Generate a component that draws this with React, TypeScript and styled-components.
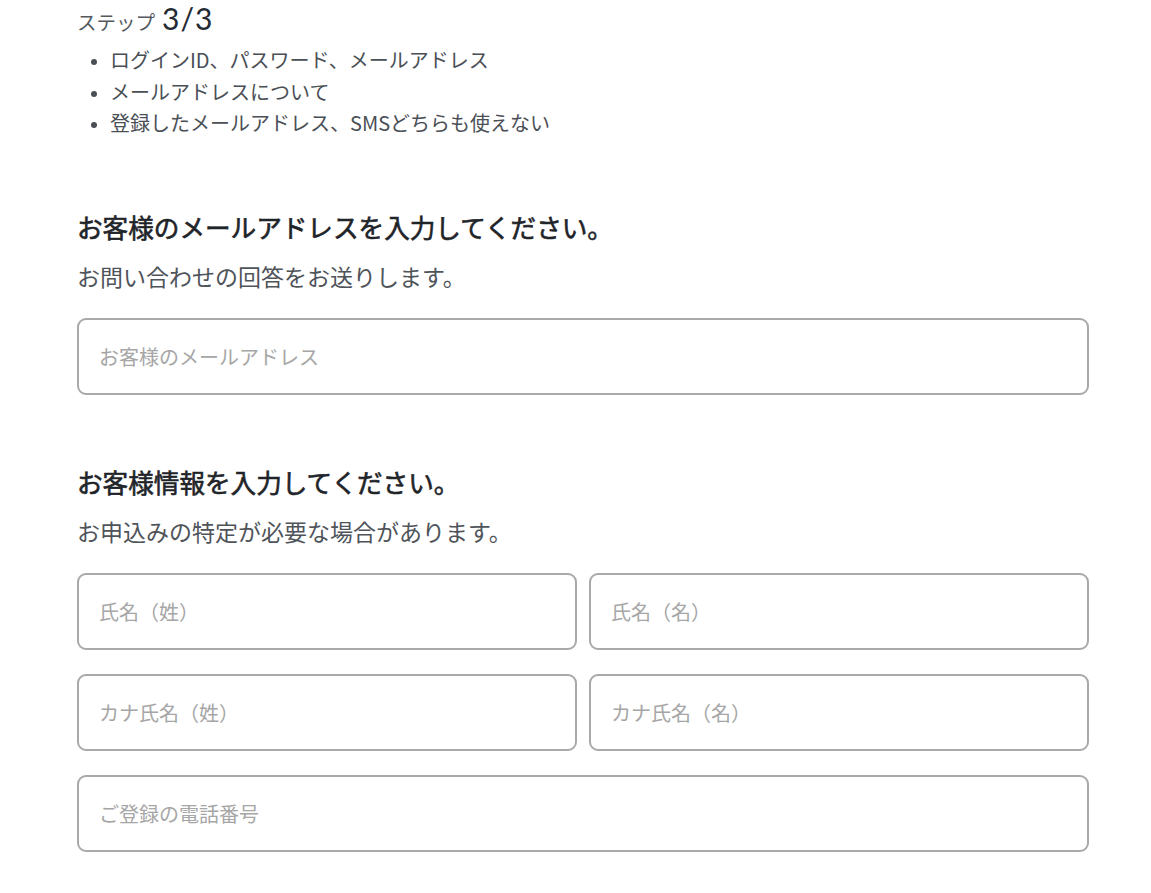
import React from "react";
import styled, { createGlobalStyle } from "styled-components";

const GlobalStyle = createGlobalStyle`
  html, body {
    margin: 0;
    padding: 0;
    background: #ffffff;
  }
  body {
    font-family: "Noto Sans CJK JP", "Noto Sans", sans-serif;
    color: #1f2329;
  }
  * { box-sizing: border-box; }
`;

const Page = styled.main`
  width: 1012px;
  margin-left: 77px;
  padding-bottom: 40px;
`;

const StepLine = styled.div`
  display: flex;
  align-items: baseline;
  gap: 7px;
  height: 36px;
  line-height: 36px;
`;

const StepLabel = styled.span`
  font-size: 19.5px;
  color: #55595e;
`;

const StepCount = styled.span`
  font-family: "Lato", "Noto Sans", sans-serif;
  font-size: 30px;
  font-weight: 400;
  color: #232a33;
  letter-spacing: 1px;
`;

const HelpList = styled.ul`
  margin: 8px 0 0;
  padding-left: 33px;
  color: #4a4f56;
  font-size: 20px;
  line-height: 31.5px;
  li::marker {
    font-size: 16px;
  }
`;

const Section = styled.section<{ $top: number }>`
  margin-top: ${(p) => p.$top}px;
`;

const Heading = styled.h2`
  margin: 0;
  font-size: 25.6px;
  line-height: 36px;
  font-weight: 400;
  color: #1f2429;
  -webkit-text-stroke: 0.6px #1f2429;
`;

const Lead = styled.p`
  margin: 15px 0 0;
  font-size: 23px;
  line-height: 32px;
  color: #4f545a;
`;

const Fields = styled.div`
  margin-top: 26px;
  display: grid;
  grid-template-columns: 1fr 1fr;
  column-gap: 12px;
  row-gap: 24px;
`;

const Field = styled.input<{ $wide?: boolean }>`
  grid-column: ${(p) => (p.$wide ? "1 / -1" : "auto")};
  width: 100%;
  height: 77px;
  border: 2px solid #a9a9ab;
  border-radius: 9px;
  padding: 0 20px;
  font-family: "Noto Sans CJK JP", "Noto Sans", sans-serif;
  font-size: 20px;
  color: #1f2329;
  background: #fff;
  outline: none;
  &::placeholder {
    color: #a6a6a6;
  }
`;

export default function App() {
  return (
    <>
      <GlobalStyle />
      <Page>
        <StepLine>
          <StepLabel>ステップ</StepLabel>
          <StepCount>3/3</StepCount>
        </StepLine>
        <HelpList>
          <li>ログインID、パスワード、メールアドレス</li>
          <li>メールアドレスについて</li>
          <li>登録したメールアドレス、SMSどちらも使えない</li>
        </HelpList>

        <Section $top={70}>
          <Heading>お客様のメールアドレスを入力してください。</Heading>
          <Lead>お問い合わせの回答をお送りします。</Lead>
          <Fields>
            <Field $wide placeholder="お客様のメールアドレス" />
          </Fields>
        </Section>

        <Section $top={69}>
          <Heading>お客様情報を入力してください。</Heading>
          <Lead>お申込みの特定が必要な場合があります。</Lead>
          <Fields>
            <Field placeholder="氏名（姓）" />
            <Field placeholder="氏名（名）" />
            <Field placeholder="カナ氏名（姓）" />
            <Field placeholder="カナ氏名（名）" />
            <Field $wide placeholder="ご登録の電話番号" />
          </Fields>
        </Section>
      </Page>
    </>
  );
}
